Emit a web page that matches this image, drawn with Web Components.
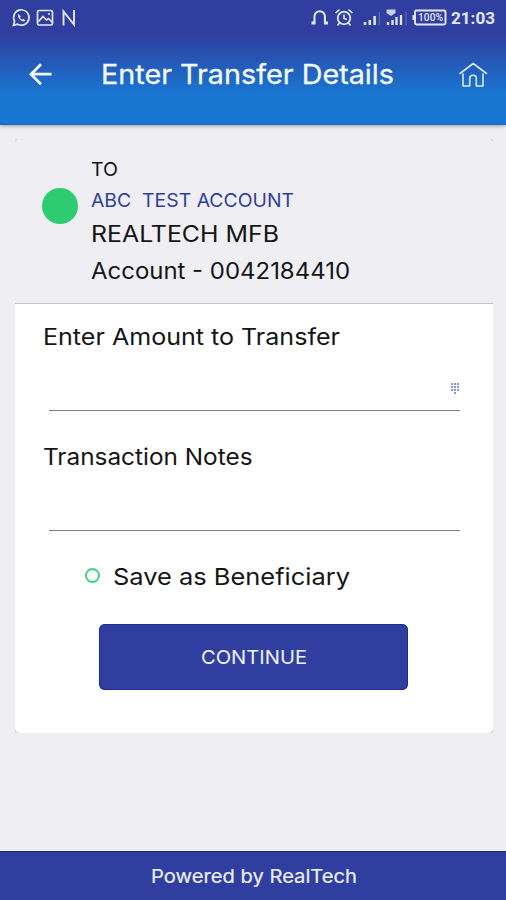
<!DOCTYPE html>
<html lang="en">
<head>
<meta charset="utf-8">
<title>Enter Transfer Details</title>
<style>
body{margin:0;background:#eeeef3;font-family:Inter,"Open Sans",sans-serif;color:#151515}
</style>
</head>
<body>
<transfer-screen></transfer-screen>
<script>
const define = (name, html, setup) => {
  const t = document.createElement('template');
  t.innerHTML = html;
  customElements.define(name, class extends HTMLElement {
    constructor() {
      super();
      this.attachShadow({ mode: 'open' }).append(t.content.cloneNode(true));
    }
    connectedCallback() { if (setup) setup(this, this.shadowRoot); }
  });
};

// A line of text of a given size, stretched horizontally to a given width.
define('fit-text', `
<style>
:host{display:flex;flex:none}
span{display:block;flex:none;transform-origin:0 50%;white-space:pre}
</style><span><slot></slot></span>`, (el, root) => {
  const span = root.querySelector('span'), w = +el.getAttribute('w');
  el.style.fontSize = el.getAttribute('size') + 'px';
  el.style.width = w + 'px';
  span.style.transform = `scaleX(${w / span.getBoundingClientRect().width})`;
});

define('status-bar', `
<style>
:host{display:flex;height:35px;align-items:center;justify-content:space-between;padding:0 11px 0 11px;box-sizing:border-box;color:#e4e7fb}
div{display:flex;align-items:center}
svg{display:block;fill:none;stroke:currentColor;overflow:visible}
fit-text{font-family:Roboto,sans-serif;font-weight:700;line-height:36px}
</style>
<div>
<svg width="66" height="20" viewBox="0 0 66 20">
 <path d="M2.5 17.3l1.1-4.1a7.7 7.7 0 1 1 3 3z" stroke-width="1.7"/>
 <path d="M7.5 6c-1.3 1.500-.4 3.800 1.600 5.700s4.300 2.300 5.400.8l-2-1.700-1.200.9c-1-.4-1.900-1.400-2.300-2.300l.8-1z" fill="currentColor" stroke="none"/>
 <rect x="26.500" y="2.500" width="15" height="14.500" rx="1.500" stroke-width="1.700"/>
 <path d="M27.500 13.500l4.500-5 3.500 3.500 2-1.500 4 4M37 6h2" stroke-width="1.700"/>
 <path d="M52.500 17.500V3.500l10.500 13V2" stroke-width="1.900"/>
</svg>
</div>
<div>
<svg width="141" height="20" viewBox="0 0 141 20">
 <path d="M4.500 14.500v-6a5.200 5.200 0 0 1 10.400 0v6" stroke-width="2"/>
 <path d="M1.500 15h4M14 15h4" stroke-width="3"/>
 <circle cx="34" cy="10" r="6.300" stroke-width="1.800"/>
 <path d="M34 6.500v4l3 1M25.500 5l4-3.300M42.500 5l-4-3.300M29.500 15l-2 2.500M38.500 15l2 2.500" stroke-width="1.600"/>
 <path d="M55 17v-3M59.800 17v-5M64.600 17V8" stroke-width="2.500"/>
 <path d="M69.300 17V4" stroke-width="1" opacity=".3"/>
 <path d="M78 17v-3M82.500 17v-5M86.500 17V9M91 17V7" stroke-width="2.300"/>
 <path d="M76.500 1.500h9v3.500l-4.500 3-4.500-3z" fill="currentColor" stroke="none" opacity=".85"/>
 <path d="M96 17V4" stroke-width="1" opacity=".3"/>
 <rect x="105" y="2.500" width="30.500" height="14" rx="1.500" stroke-width="1.900"/>
 <path d="M103.500 7v5" stroke-width="2"/>
 <text x="108" y="13.200" font-family="Roboto, sans-serif" font-size="10" font-weight="500" textLength="25" lengthAdjust="spacingAndGlyphs" fill="currentColor" stroke="none">100%</text>
</svg>
<fit-text size="17" w="44">21:03</fit-text>
</div>`);

define('app-header', `
<style>
:host{display:block;height:125px;color:#f3f8ff;background:linear-gradient(#303f9f 0,#303f9f 34px,#1976d2 94px,#1976d2 123px,#0f67bf 125px);box-shadow:0 1px 4px rgba(0,0,0,.35);flex:none}
nav{display:flex;height:77px;align-items:center;padding:0 18px 0 27.500px}
svg{display:block;flex:none;fill:none;stroke:currentColor}
fit-text{line-height:77px;margin:1px auto 0 48.500px;-webkit-text-stroke:.3px currentColor}
</style>
<status-bar></status-bar>
<nav>
<svg width="25" height="24" viewBox="0 0 25 24"><path d="M23.500 12.200H3M13 2.200l-10 10 10 10" stroke-width="2.700"/></svg>
<fit-text size="26.6" w="293"><slot></slot></fit-text>
<svg width="30" height="28" viewBox="0 0 30 28" stroke-linejoin="round" stroke-linecap="round"><path d="M2 13.500L15.200 3.500 28.500 13.500M5 14v12h6.700v-7.500a3.300 3.300 0 0 1 6.600 0V26h6.700V14" stroke-width="1.600" stroke="#d9e9fb"/></svg>
</nav>`);

define('account-summary', `
<style>
:host{display:flex;height:165px;box-sizing:border-box;padding:15px 0 0 27.500px;gap:13px;background:#eeeef3;border-bottom:1px solid #c4c4c8}
i{width:36px;height:36px;border-radius:50%;background:#2ecc71;margin-top:34px}
.t{line-height:31px}.n{line-height:31px;color:#303f9f}.b{line-height:36px}.a{line-height:37px}
</style>
<i></i>
<div>
<fit-text class="t" size="19" w="27">TO</fit-text>
<fit-text class="n" size="19" w="203">ABC  TEST ACCOUNT</fit-text>
<fit-text class="b" size="22.5" w="188">REALTECH MFB</fit-text>
<fit-text class="a" size="22.5" w="259">Account - 0042184410</fit-text>
</div>`);

define('form-field', `
<style>
:host{display:flex;flex-direction:column;height:89px}
.label{line-height:30px}
.in{flex:1;margin-left:6px;width:411px;border-bottom:1px solid #7e7e7e;display:flex;justify-content:flex-end;padding-top:31px;box-sizing:border-box}
</style>
<div class="label"><slot></slot></div>
<div class="in"><slot name="icon"></slot></div>`);

define('radio-option', `
<style>
:host{display:flex;align-items:center;height:30px}
i{width:15px;height:15px;border:2px solid #45cf80;border-radius:50%;box-sizing:border-box;margin:-3px 13.500px 0 0}
fit-text{line-height:30px}
</style><i></i><fit-text size="23" w="237"><slot></slot></fit-text>`);

define('primary-button', `
<style>
:host{display:flex;width:309px;height:66px;border-radius:6px;background:#303f9f;box-shadow:inset 0 0 0 1px #202d96;color:#f0f2ff;justify-content:center;align-items:center}
fit-text{line-height:66px}
</style><fit-text size="19.3" w="106"><slot></slot></fit-text>`);

define('transfer-card', `
<style>
:host{display:block;width:478px;height:594px;margin:14px 0 0 14.500px;border-radius:2px;background:#cfcfd3}
.card{height:594px;border-radius:5px;background:#fff;overflow:hidden}
.form{padding:18px 0 0 28px}
.notes{margin-top:31px}
radio-option{margin:31px 0 0 42px}
primary-button{margin:32px 0 0 56.500px}
</style>
<div class="card">
<account-summary></account-summary>
<div class="form">
<form-field><fit-text size="22.5" w="297">Enter Amount to Transfer</fit-text>
<svg slot="icon" width="10" height="12" viewBox="0 0 10 12" fill="#5b78c5"><path d="M1 0h2v2H1zM4 0h2v2H4zM7 0h2v2H7zM1 3h2v2H1zM4 3h2v2H4zM7 3h2v2H7zM1 6h2v2H1zM4 6h2v2H4zM7 6h2v2H7zM4 9h2v2H4z" opacity=".75"/></svg></form-field>
<form-field class="notes"><fit-text size="22.5" w="209.5">Transaction Notes</fit-text></form-field>
<radio-option>Save as Beneficiary</radio-option>
<primary-button>CONTINUE</primary-button>
</div></div>`);

define('app-footer', `
<style>
:host{display:flex;height:49px;margin-top:auto;background:#303f9f;border-top:1px solid #1a278f;box-sizing:border-box;justify-content:center;color:#eceeff}
fit-text{line-height:48px;margin-left:1px;-webkit-text-stroke:.2px currentColor}
</style><fit-text size="19.3" w="206"><slot></slot></fit-text>`);

define('transfer-screen', `
<style>:host{display:flex;flex-direction:column;height:900px;width:506px;overflow:hidden}</style>
<app-header>Enter Transfer Details</app-header>
<transfer-card></transfer-card>
<app-footer>Powered by RealTech</app-footer>`);
</script>
</body>
</html>
